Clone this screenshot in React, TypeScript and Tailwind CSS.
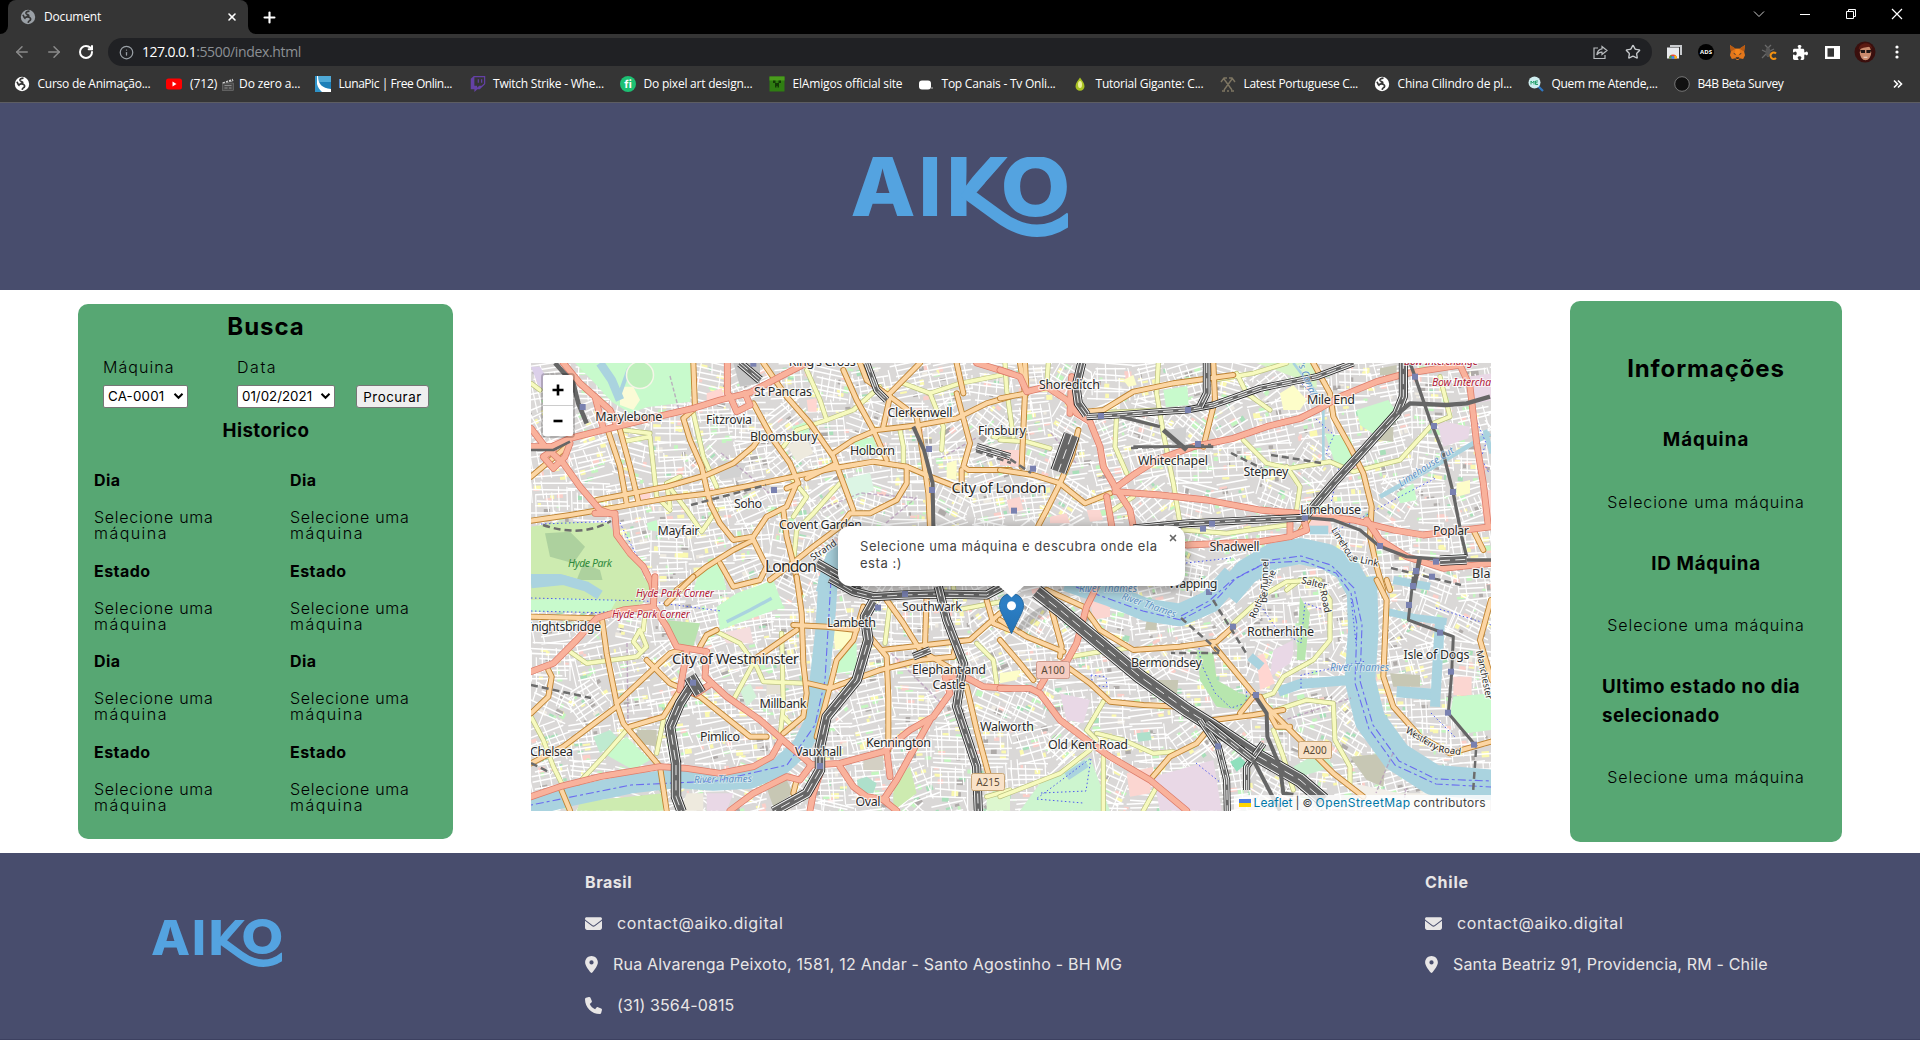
import React from "react";
import { FaEnvelope, FaLocationDot, FaPhone, FaPuzzlePiece, FaTwitch } from "react-icons/fa6";
import { ArrowLeft, ArrowRight, Info, RotateCw, Star, X, Plus } from "lucide-react";

/* ---------- Logo ---------- */

function AikoLogo({ className }: { className: string }) {
  return (
    <svg className={className} viewBox="0 0 216 80" preserveAspectRatio="none">
      <defs>
        <clipPath id="k-upper">
          <path d="M95 -5 H160 L126 34 L116 44 V62 H95 Z" />
        </clipPath>
      </defs>
      <g fill="#54a3e0" fontFamily="Inter" fontWeight="800" fontSize="81">
        <text x="-1.5" y="59.3" textLength="65" lengthAdjust="spacingAndGlyphs">A</text>
        <text x="66.5" y="59.3">I</text>
        <g clipPath="url(#k-upper)">
          <text x="94" y="59.3" textLength="66" lengthAdjust="spacingAndGlyphs">K</text>
        </g>
        <text x="148.5" y="59" textLength="70" lengthAdjust="spacingAndGlyphs">O</text>
      </g>
      <path
        d="M112 34 L147 59.5 C160 69 171 73.700 185 73.700 C198 73.700 208 69.500 219 60.500"
        fill="none"
        stroke="#54a3e0"
        strokeWidth="12.5"
      />
    </svg>
  );
}

/* ---------- Browser icons ---------- */

function Globe({ color, className = "size-4" }: { color: string; className?: string }) {
  return (
    <svg className={className} viewBox="0 0 16 16">
      <circle cx="8" cy="8" r="7.2" fill={color} />
      <path d="M9.500 2.200c-2 .2-3.800.6-3.500 2.200.3 1.300 2 .8 2.600 1.700.5 1-1 1.300-2.200 1.400M5 8.500c1.500-.6 4-.7 5.200.5 1 1 .2 2.200-.9 2.900-.6.400-1 1-1.100 1.900M3 5.800c.6 1.800 1.200 3 2.600 4" fill="none" stroke="#353535" strokeWidth="1.700" />
    </svg>
  );
}

function YouTubeIcon() {
  return (
    <svg className="size-4" viewBox="0 0 16 16">
      <rect x="0" y="2.500" width="16" height="11" rx="2.500" fill="#f00" />
      <path d="M6.500 5.600v4.800l4-2.400z" fill="#fff" />
    </svg>
  );
}

function LunaIcon() {
  return (
    <svg className="size-4" viewBox="0 0 16 16">
      <rect width="16" height="16" fill="#1d7fb8" />
      <rect width="16" height="6" fill="#4fa9d6" />
      <path d="M3 0c0 8 4 12 13 13v3H0V0z" fill="#fff" />
      <path d="M0 0h2v8c1 4 3 6 5 8H0z" fill="#2f93c9" />
    </svg>
  );
}

function FiIcon() {
  return (
    <span className="flex size-4 items-center justify-center rounded-full bg-[#1dbf73] font-['Inter'] text-[11px] leading-none font-bold text-white">
      fi
    </span>
  );
}

function CreeperIcon() {
  return (
    <svg className="size-4" viewBox="0 0 16 16">
      <rect x="0.500" y="0.500" width="15" height="15" fill="#2f7d12" />
      <rect x="0.500" y="0.500" width="15" height="4" fill="#4a9c1c" />
      <path d="M4 4.500h2.500v2.500h3v-2.500h2.500v2.500h-2v4.500h-1.500v-1.500h-1v1.500h-1.500v-4.500h-2z" fill="#123a05" />
    </svg>
  );
}

function TvIcon() {
  return (
    <svg className="size-4" viewBox="0 0 16 16">
      <rect x="1" y="4.500" width="12" height="9" rx="3" fill="#fff" />
      <rect x="13.500" y="11" width="1" height="2" fill="#bbb" />
    </svg>
  );
}

function DropIcon() {
  return (
    <svg className="size-4" viewBox="0 0 16 16">
      <path d="M8 1.500C10 4.500 12.500 7 12.500 10.200A4.500 4.500 0 0 1 3.500 10.200C3.500 7 6 4.500 8 1.500z" fill="#a9c223" />
      <ellipse cx="8" cy="8.500" rx="2" ry="3.500" fill="#eef09a" />
    </svg>
  );
}

function PickaxesIcon() {
  return (
    <svg className="size-4" viewBox="0 0 16 16" fill="none" stroke="#7d7562" strokeWidth="1.400">
      <path d="M4 3l8 11M12 3L4 14M1 6l3-4 3 0M15 6l-3-4-3 0M2 15h3M11 15h3M7 15h2" />
    </svg>
  );
}

function MagnifierIcon() {
  return (
    <svg className="size-4" viewBox="0 0 16 16">
      <path d="M10 10l5 5" stroke="#2f78c4" strokeWidth="2.200" />
      <circle cx="6.500" cy="6.500" r="6" fill="#cfeef0" />
      <path d="M3 8.500V5l1.500 2L6 5v3.500M10 5H7.500v3.500H10M7.500 6.800H9.500" stroke="#23a06a" fill="none" />
    </svg>
  );
}

function DarkDotIcon() {
  return (
    <svg className="size-4" viewBox="0 0 16 16">
      <circle cx="8" cy="8" r="7.300" fill="#111" stroke="#777" />
    </svg>
  );
}

function ClapperIcon() {
  return (
    <svg className="mx-[5px] h-[13px] w-3" viewBox="0 0 12 13">
      <rect x="0.500" y="5" width="11" height="7.500" fill="#4a4a4a" stroke="#777" strokeWidth="0.600" />
      <path d="M0.500 4.500L10.500 0.800L11.500 3L1 5.500z" fill="#ddd" />
      <path d="M3 3.500l1 1.200M6 2.500l1 1.200M9 1.400l1 1.200" stroke="#222" strokeWidth="1.300" />
      <path d="M2.500 7.500h7M2.500 10h3M7 10h2.500" stroke="#aaa" strokeWidth="0.700" />
    </svg>
  );
}

const bookmarks = [
  { icon: <Globe color="#fff" />, text: "Curso de Animação...", box: "w-[152px]", track: "tracking-[-0.25px]" },
  { icon: <YouTubeIcon />, text: "", box: "w-[149px]", track: "" },
  { icon: <LunaIcon />, text: "LunaPic | Free Onlin...", box: "w-[154.500px]", track: "tracking-[-0.45px]" },
  { icon: <FaTwitch className="size-4 text-[#6441a5]" />, text: "Twitch Strike - Whe...", box: "w-[150.500px]", track: "tracking-[-0.23px]" },
  { icon: <FiIcon />, text: "Do pixel art design...", box: "w-[149px]", track: "tracking-[-0.22px]" },
  { icon: <CreeperIcon />, text: "ElAmigos official site", box: "w-[149px]", track: "tracking-[-0.17px]" },
  { icon: <TvIcon />, text: "Top Canais - Tv Onli...", box: "w-[154px]", track: "tracking-[-0.23px]" },
  { icon: <DropIcon />, text: "Tutorial Gigante: C...", box: "w-[148px]", track: "tracking-[-0.22px]" },
  { icon: <PickaxesIcon />, text: "Latest Portuguese C...", box: "w-[154px]", track: "tracking-[-0.31px]" },
  { icon: <Globe color="#fff" />, text: "China Cilindro de pl...", box: "w-[154px]", track: "tracking-[-0.18px]" },
  { icon: <MagnifierIcon />, text: "Quem me Atende,...", box: "w-[146px]", track: "tracking-[-0.29px]" },
  { icon: <DarkDotIcon />, text: "B4B Beta Survey", box: "w-[150px]", track: "tracking-[-0.38px]" },
];

function BrowserChrome() {
  return (
    <div className="h-[103px] w-full border-b border-[#5d5d62] bg-[#353535] font-['Open_Sans',sans-serif] text-xs text-white">
      <div className="flex h-[34px] items-end bg-black">
        <div className="h-2 w-2 bg-[#353535]">
          <div className="h-2 w-2 rounded-br-lg bg-black" />
        </div>
        <div className="flex h-[34px] w-60 items-center rounded-t-lg bg-[#353535] pr-[10px] pl-3">
          <Globe color="#9aa0a6" />
          <span className="ml-2 tracking-[-0.17px]">Document</span>
          <X className="ml-auto size-3" strokeWidth={3.2} />
        </div>
        <div className="h-2 w-2 bg-[#353535]">
          <div className="h-2 w-2 rounded-bl-lg bg-black" />
        </div>
        <div className="flex h-[34px] grow items-center">
          <Plus className="ml-[5px] size-[17px]" strokeWidth={3} />
          <div className="mr-[17px] mb-[6px] ml-auto flex w-[150px] items-center justify-between">
            <svg className="h-3 w-3" viewBox="0 0 12 12" fill="none" stroke="#ccc">
              <path d="M1 3.500l5 5 5-5" />
            </svg>
            <svg className="h-3 w-3" viewBox="0 0 12 12" stroke="#fff">
              <path d="M1 6.500h10" />
            </svg>
            <svg className="h-3 w-3" viewBox="0 0 12 12" fill="none" stroke="#fff">
              <path d="M1.500 3.500h7v7h-7zM3.500 3.500v-2h7v7h-2" />
            </svg>
            <svg className="h-3 w-3" viewBox="0 0 12 12" stroke="#fff" strokeWidth="1.200">
              <path d="M1 1l10 10M11 1L1 11" />
            </svg>
          </div>
        </div>
      </div>

      <div className="flex h-9 items-center pl-[13px]">
        <ArrowLeft className="size-[18px] text-[#8b8b8b]" />
        <ArrowRight className="ml-[14px] size-[18px] text-[#8b8b8b]" />
        <RotateCw className="ml-[15px] size-4" strokeWidth={3} />
        <div className="ml-[14px] flex h-7 w-[1544px] items-center rounded-full bg-[#202124] pr-[11px] pl-[11px] text-sm">
          <Info className="size-[15px] text-[#9aa0a6]" />
          <span className="ml-[8px] tracking-[-0.55px]">127.0.0.1</span>
          <span className="tracking-[-0.35px] text-[#8c9094]">:5500/index.html</span>
          <svg className="ml-auto size-[15px]" viewBox="0 0 15 15" fill="none" stroke="#b8bbbe" strokeWidth="1.200">
            <path d="M5 3H1v10.500h11V10M9 1.500l5 4-5 4V7.200C6.500 7 5 8 3.800 10 4.200 6.500 6 4.300 9 3.800z" />
          </svg>
          <Star className="ml-[17px] size-4 text-[#c7cacd]" />
        </div>
        <div className="ml-[14px] flex grow items-center">
          <svg className="size-4" viewBox="0 0 16 16">
            <path d="M4 1h12v10h-2V3H4z" fill="#c9cbce" />
            <rect x="1" y="3.500" width="12" height="11" fill="#e8eaed" />
            <path d="M3 14.500a4 4 0 0 1 8 0z" fill="#ea4335" />
            <path d="M3 14.500a4 4 0 0 1 2-3.500l2 3.500z" fill="#34a853" />
            <path d="M9 11a4 4 0 0 1 2 3.500H7z" fill="#fbbc04" />
            <circle cx="7" cy="13.500" r="1.600" fill="#4285f4" />
          </svg>
          <span className="ml-4 flex size-4 items-center justify-center rounded-full bg-black text-[6px] font-bold">ADS</span>
          <svg className="ml-[15px] size-[17px]" viewBox="0 0 18 18">
            <path d="M1 1l6 4h4l6-4-1 7 1 4-2 4-4-1-1 2H8l-1-2-4 1-2-4 1-4z" fill="#e2761b" />
            <path d="M7 5h4l1 5-3 2-3-2z" fill="#f6851b" />
            <path d="M1 1l6 4-5 3zM17 1l-6 4 5 3z" fill="#b85a12" />
            <path d="M7 14h4l-1 2H8z" fill="#2b2b2b" />
            <path d="M5 10l2 1M13 10l-2 1" stroke="#333" />
          </svg>
          <svg className="ml-[15px] size-[17px]" viewBox="0 0 17 17">
            <path d="M4 1l3 3M10 1L7 4M1 6l4 2M13 5L9 7M1 14l4-4M7 4v9" stroke="#6a6a6a" strokeWidth="1.300" />
            <ellipse cx="7" cy="8" rx="2.500" ry="4.500" fill="#555" />
            <path d="M15 9.500A3.200 3.200 0 1 0 15 14" fill="none" stroke="#f29111" strokeWidth="2" />
          </svg>
          <FaPuzzlePiece className="ml-[15px] size-[15px]" />
          <svg className="ml-[17px] size-[15px]" viewBox="0 0 15 15">
            <path d="M0 1h15v13H0zM2.500 3.300v8.400h6.500V3.300z" fill="#fff" fillRule="evenodd" />
          </svg>
          <svg className="ml-[14px] size-[22px]" viewBox="0 0 23 23">
            <circle cx="11.500" cy="11.500" r="11" fill="#3a0f0d" />
            <ellipse cx="12" cy="12" rx="6" ry="8" fill="#c98a6d" />
            <path d="M5 9c0-8 13-9 14-1l-3-2-6 1z" fill="#5c1a12" />
            <path d="M6.500 9.500h5v3h-4zM13 9.500h5l-1 3h-4z" fill="#1c1414" />
            <path d="M10 17h4" stroke="#f0e0d5" />
          </svg>
          <svg className="ml-[19px] h-4 w-1" viewBox="0 0 4 16" fill="#fff">
            <circle cx="2" cy="3" r="1.600" />
            <circle cx="2" cy="8" r="1.600" />
            <circle cx="2" cy="13" r="1.600" />
          </svg>
        </div>
      </div>

      <div className="flex h-[28px] items-center pl-[14px] whitespace-nowrap">
        {bookmarks.map((b) => (
          <div key={b.box + b.text} className={`flex shrink-0 items-center ${b.box}`}>
            {b.icon}
            {b.text ? (
              <span className={`ml-[7.500px] ${b.track}`}>{b.text}</span>
            ) : (
              <span className="ml-[8px] flex items-center tracking-[-0.12px]">
                (712)
                <ClapperIcon />
                Do zero a...
              </span>
            )}
          </div>
        ))}
        <svg className="mr-[17px] ml-auto size-[10px]" viewBox="0 0 10 10" fill="none" stroke="#fff" strokeWidth="1.600">
          <path d="M1 1.500l3.500 3.500L1 8.500M5 1.500l3.500 3.500L5 8.500" />
        </svg>
      </div>
    </div>
  );
}

/* ---------- Search panel ---------- */

function SelectBox({ value, box, track }: { value: string; box: string; track: string }) {
  return (
    <div className={`relative h-[23px] ${box}`}>
      <select
        className={`block h-full w-full appearance-none rounded-[2px] border border-[#767676] bg-white pl-[4px] text-[13.33px] leading-[19px] font-normal text-black ${track}`}
        defaultValue={value}
      >
        <option>{value}</option>
      </select>
      <svg className="pointer-events-none absolute top-[7px] right-[4px] h-2 w-[11px]" viewBox="0 0 11 8" fill="none" stroke="#000" strokeWidth="2">
        <path d="M1.500 1.800L5.500 5.800L9.500 1.800" />
      </svg>
    </div>
  );
}

function HistoryColumn() {
  return (
    <div className="flex flex-col gap-[21.300px] text-base leading-4">
      {["Dia", "Estado", "Dia", "Estado"].map((title, i) => (
        <React.Fragment key={i}>
          <h4 className="font-bold tracking-[0.45px]">{title}</h4>
          <p className="font-light tracking-[0.74px]">
            Selecione uma
            <br />
            <span className="tracking-[1.450px]">máquina</span>
          </p>
        </React.Fragment>
      ))}
    </div>
  );
}

function SearchPanel() {
  return (
    <section className="mt-[14px] ml-[78px] flex h-[535px] w-[375px] shrink-0 flex-col rounded-[10px] bg-[#57a773] pt-[5px] text-black">
      <h2 className="pl-[1px] text-center text-2xl leading-9 font-bold tracking-[0.95px]">Busca</h2>
      <div className="mt-[10px] flex pl-[25px] font-light">
        <label className="flex w-[134px] flex-col gap-[6px] tracking-[1.050px]">
          Máquina
          <SelectBox value="CA-0001" box="w-[85px]" track="tracking-[0.2px]" />
        </label>
        <label className="flex w-[119px] flex-col gap-[6px] tracking-[1.550px]">
          Data
          <SelectBox value="01/02/2021" box="w-[98px]" track="tracking-[0px]" />
        </label>
        <button className="mt-[30px] h-[23px] w-[73px] rounded-[3px] border border-[#767676] bg-[#efefef] pt-[2px] text-[13.33px] leading-none font-normal tracking-[0.5px]">
          Procurar
        </button>
      </div>
      <h3 className="mt-[9px] pl-[1px] text-center text-[18.72px] leading-7 font-bold tracking-[0.45px]">Historico</h3>
      <div className="mt-[27px] grid grid-cols-[196px_1fr] pl-4">
        <HistoryColumn />
        <HistoryColumn />
      </div>
    </section>
  );
}

/* ---------- Info panel ---------- */

function InfoPanel() {
  return (
    <section className="mt-[11px] ml-[79px] flex h-[541px] w-[272px] shrink-0 flex-col items-center rounded-[10px] bg-[#57a773] pt-[50px] text-black">
      <h2 className="text-2xl leading-9 font-bold tracking-[0.9px]">Informações</h2>
      <h3 className="mt-[39px] text-[18.72px] leading-7 font-bold tracking-[1.050px]">Máquina</h3>
      <p className="mt-9 leading-6 font-light tracking-[0.92px]">Selecione uma máquina</p>
      <h3 className="mt-9 text-[18.72px] leading-7 font-bold tracking-[0.7px]">ID Máquina</h3>
      <p className="mt-[35px] leading-6 font-light tracking-[0.92px]">Selecione uma máquina</p>
      <h3 className="mt-[35px] w-[208px] text-[18.72px] leading-[29px] font-bold tracking-[0.6px] whitespace-nowrap">
        Ultimo estado no dia
        <br />
        selecionado
      </h3>
      <p className="mt-[35px] leading-6 font-light tracking-[0.92px]">Selecione uma máquina</p>
    </section>
  );
}

/* ---------- Map drawing ---------- */

type Shape = { d: string; w?: number };
type Tile = {
  dx: number;
  dy: number;
  areas: { d: string; c: string }[];
  water: Shape[];
  rail: Shape[];
  yellow: string[];
  orange: string[];
  red: string[];
  stations: [number, number][];
};

const GREEN = "#c8facc";
const PARK = "#cdebb0";
const WOOD = "#add19e";
const MAUVE = "#e9d8e6";
const PINK = "#fbd6d1";
const BROWN = "#c7c7b4";

const tiles: Tile[] = [
  {
    dx: -33,
    dy: -39,
    areas: [
      { d: "165,39 522,39 510,155 380,172 330,190 275,155 220,95", c: GREEN },
      { d: "300,110 340,110 360,150 340,180 300,165", c: "#fbfbd6" },
      { d: "33,530 120,515 265,520 300,575 350,630 390,725 33,725", c: PARK },
      { d: "75,550 150,545 195,590 160,640 90,620", c: WOOD },
      { d: "190,640 240,660 250,700 170,690", c: WOOD },
      { d: "33,680 100,690 140,725 33,725", c: WOOD },
      { d: "965,390 1050,368 1062,420 990,452", c: "#dcf5e4" },
      { d: "1000,275 1060,260 1072,305 1020,312", c: GREEN },
      { d: "815,230 860,215 870,250 830,260", c: GREEN },
      { d: "800,285 860,265 880,310 830,335", c: "#eeeade" },
      { d: "380,520 410,510 415,545 385,540", c: GREEN },
      { d: "560,130 605,115 615,150 560,160", c: "#ffd6d1" },
      { d: "860,150 890,145 890,185 865,185", c: "#ffd6d1" },
      { d: "355,420 390,420 390,455 360,450", c: "#ffd6d1" },
      { d: "590,330 680,340 660,380 600,390", c: "#d2d2d2" },
      { d: "640,39 720,39 720,100 660,110", c: "#c4c4c4" },
      { d: "540,660 600,640 620,720 520,720", c: GREEN },
      { d: "33,50 60,50 90,100 60,120", c: "#dcd0ea" },
      { d: "1280,340 1310,330 1310,390 1280,385", c: "#fdfdc9" },
    ],
    water: [
      { d: "240,39 275,90 300,150", w: 26 },
      { d: "300,130 325,60 345,39", w: 12 },
      { d: "33,690 120,690 200,715 250,740", w: 36 },
      { d: "960,590 935,650 915,730", w: 56 },
    ],
    rail: [
      { d: "105,39 160,100 175,160 200,220", w: 14 },
      { d: "660,39 720,90", w: 20 },
      { d: "1040,39 1070,120 1100,150", w: 16 },
      { d: "1180,230 1212,300 1238,400 1240,530", w: 12 },
      { d: "1370,290 1470,320", w: 16 },
      { d: "33,300 100,300 150,275", w: 8 },
      { d: "890,640 960,680 1020,720", w: 26 },
    ],
    yellow: [
      "33,100 60,120", "310,275 390,260 400,350 410,440 450,480", "520,190 550,320 590,410",
      "440,400 500,480 545,545 590,480", "860,60 900,150 920,210 1000,180 1080,110", "920,210 830,240 790,290",
      "1150,100 1230,130 1320,100 1470,70", "1230,130 1270,230 1265,300", "820,640 830,540 880,490 960,400",
      "1420,260 1470,270", "820,500 860,440 810,380", "310,240 390,250", "1150,350 1150,290 1140,240", "450,470 440,400 480,380",
    ],
    orange: [
      "33,512 150,495 240,480 300,470 440,445 570,430 700,405 820,380 940,355 1060,335 1160,350 1230,380 1320,415",
      "230,450 440,410 560,375 640,340 700,290 720,260", "33,380 140,290", "265,245 300,350 320,460", "300,240 330,350 355,455",
      "520,39 525,175 490,205 510,270 545,350 570,460 600,520 640,570 700,560 740,500 800,470 830,400",
      "700,160 760,270 810,340 835,400 800,415", "730,39 800,140 870,220 940,320 970,400 1000,480",
      "940,310 1000,270 1070,240 1200,225 1310,205 1400,160 1470,140", "860,385 940,345", "970,60 1010,150 1060,240 1100,330",
      "1020,39 1040,90 1110,140 1090,230", "1110,130 1200,39", "1110,140 1190,200 1210,320 1225,430 1230,530",
      "1310,130 1330,205 1350,280 1330,350 1345,360 1470,360", "1160,350 1160,400 1130,450 1050,490 990,490 960,530 880,590 830,630 750,690",
      "470,720 560,650 640,600 700,570", "790,480 800,560 820,640 840,730", "700,570 740,650 720,690 640,710 600,640", "1325,360 1325,410",
      "1330,130 1310,39",
    ],
    red: [
      "33,290 95,290 150,265 280,232 400,203 520,175 600,150 690,128 780,80 860,39", "130,39 180,100 225,140 270,180 290,225",
      "225,140 250,235", "622,39 622,130 635,145", "635,150 650,185 690,165 675,130", "33,235 75,290 130,340 180,410 240,480 285,495 290,555 330,610 370,650 395,700 402,740",
      "150,280 135,320 100,355 70,320 100,300", "1370,39 1470,70", "225,490 285,490",
    ],
    stations: [[188, 171], [762, 420], [1227, 297], [1236, 420], [700, 41]],
  },
  {
    dx: 1407,
    dy: -39,
    areas: [
      { d: "490,120 562,108 566,165 498,172", c: GREEN },
      { d: "1070,180 1165,150 1200,200 1140,265 1080,225", c: GREEN },
      { d: "975,250 1050,260 1072,330 1010,355", c: GREEN },
      { d: "770,39 950,39 950,115 880,80", c: "#d8f5c6" },
      { d: "840,130 880,105 920,150 900,180 850,180", c: "#fdfdc9" },
      { d: "370,90 400,75 410,105 385,110", c: "#fdfdc9" },
      { d: "1310,210 1410,230 1405,265 1330,290", c: MAUVE },
      { d: "1400,80 1475,70 1475,150 1430,160", c: MAUVE },
      { d: "1130,240 1180,230 1180,275 1130,270", c: BROWN },
      { d: "1140,55 1190,45 1190,75 1140,75", c: BROWN },
      { d: "1190,430 1240,400 1250,450 1200,460", c: GREEN },
      { d: "1370,400 1410,390 1410,430 1370,440", c: "#fdfdc9" },
      { d: "920,510 990,510 1000,550 940,540", c: PINK },
      { d: "20,450 60,440 70,480 30,490", c: PINK },
      { d: "150,500 200,490 210,520 150,520", c: PINK },
      { d: "260,480 300,480 310,510 270,515", c: PINK },
      { d: "0,300 60,300 55,350 0,345", c: PINK },
      { d: "500,240 560,230 555,290 520,290", c: "#d0d0d0" },
      { d: "1440,420 1475,420 1475,520 1450,500", c: PINK },
    ],
    water: [
      { d: "680,735 740,665 820,618 900,603 980,620 1040,655 1085,735", w: 78 },
      { d: "970,180 970,330", w: 8 },
      { d: "880,39 950,130", w: 8 },
      { d: "1140,440 1300,350 1470,250", w: 14 },
      { d: "1180,690 1290,710", w: 24 },
      { d: "1455,240 1475,310", w: 14 },
      { d: "930,540 985,540", w: 26 },
    ],
    rail: [
      { d: "260,200 350,195 480,185 560,180 640,165 780,115 950,80 1060,39", w: 16 },
      { d: "245,39 228,110 235,160 260,195", w: 22 },
      { d: "620,39 620,130 600,170", w: 18 },
      { d: "915,500 1000,400 1100,290 1190,190 1210,140 1210,39", w: 22 },
      { d: "1195,190 1230,160 1340,165 1400,160 1470,140", w: 13 },
      { d: "400,535 560,520 760,510 915,503", w: 18 },
      { d: "915,503 1000,510 1080,540 1140,590 1220,620 1340,630 1475,630", w: 10 },
      { d: "1230,39 1245,80 1290,210 1330,310 1360,430 1385,560 1400,620", w: 10 },
      { d: "360,200 480,230", w: 10 },
      { d: "490,240 560,300", w: 14 },
      { d: "215,255 175,365", w: 44 },
      { d: "1320,632 1400,628", w: 26 },
      { d: "1260,620 1240,720", w: 14 },
      { d: "400,290 640,290", w: 8 },
    ],
    yellow: [
      "15,39 20,120 40,260", "0,270 80,275 150,295", "145,39 140,110", "350,190 345,290 380,370", "340,480 400,440",
      "475,39 470,130 490,250 520,400 540,520", "640,90 760,70 860,39", "710,70 740,130 810,180", "730,270 800,340 870,355 990,335 1060,365 1200,330 1300,220 1350,200 1320,80",
      "860,350 900,410 890,480", "550,540 680,550 860,525", "270,190 480,180",
      "860,720 900,690 960,690",
    ],
    orange: [
      "0,145 80,130 75,39", "60,39 75,130 65,350", "260,185 310,180 400,125 520,100 700,75", "640,39 645,150 610,290",
      "0,360 100,375 180,400 255,460 330,430", "235,240 215,320 180,400 140,480 115,527", "940,39 990,130 1000,200 1050,290 1090,370 1115,470 1110,560 1130,650 1150,720",
      "1420,540 1450,600", "900,545 930,500", "1160,690 1170,720",
    ],
    red: [
      "0,60 60,80 80,125 140,110 200,150 230,190 270,215 300,290 310,350 345,410 390,480 400,530", "215,80 210,190",
      "345,415 400,375 470,330 580,290 700,265 800,230 900,205 960,175 1020,140 1130,95 1220,70 1380,45 1410,110 1430,280 1450,400 1465,530",
      "345,425 480,435 620,450 780,480 900,490 1060,510 1180,540 1270,555 1475,530", "1100,510 1140,570 1220,620 1330,655 1475,640",
      "560,585 780,575 870,560 920,540 910,500", "320,440 335,527", "870,560 870,520",
    ],
    stations: [[303, 198], [564, 180], [594, 282], [99, 356], [42, 482], [915, 503], [636, 521], [609, 536], [1245, 80], [1302, 228], [1359, 426], [1140, 588], [1308, 635], [1248, 663], [1296, 680]],
  },
  {
    dx: -33,
    dy: 651,
    areas: [
      { d: "33,0 400,0 370,70 280,100 33,95", c: PARK },
      { d: "130,55 290,60 270,95 33,95 33,60", c: GREEN },
      { d: "590,80 650,40 760,0 790,80 600,150", c: GREEN },
      { d: "430,120 540,130 520,200 475,195", c: "#b9e2ae" },
      { d: "320,470 390,540 340,570 250,520", c: GREEN },
      { d: "180,665 430,640 430,692 170,692", c: PARK },
      { d: "960,200 1010,190 1010,270 950,280", c: GREEN },
      { d: "940,150 1000,130 990,200 945,210", c: "#fdfdc9" },
      { d: "660,330 690,310 710,350 680,380", c: "#d3f3d9" },
      { d: "740,300 790,300 790,340 740,345", c: "#e4e0d4" },
      { d: "500,640 550,640 550,692 480,692", c: "#eeeade" },
      { d: "560,640 640,640 620,692 560,692", c: MAUVE },
      { d: "735,610 800,600 820,640 760,680", c: BROWN },
      { d: "350,450 410,450 410,500 360,490", c: BROWN },
      { d: "1010,600 1040,590 1070,610 1060,640 1020,640", c: "#aee0cb" },
      { d: "1120,600 1170,560 1190,640 1120,692", c: PARK },
      { d: "220,470 270,450 300,480 240,520", c: "#bfead0" },
      { d: "600,160 690,140 700,190 620,190", c: "#f5dede" },
      { d: "1400,640 1470,640 1470,692 1400,692", c: "#ddf7cf" },
      { d: "1030,520 1090,520 1090,570 1030,570", c: "#d4d0c4" },
    ],
    water: [
      { d: "925,-10 915,150 898,300 885,420 845,500 780,560 690,597 580,603 470,595 330,612 150,650 20,682", w: 58 },
      { d: "33,10 130,0 200,20 240,45", w: 30 },
      { d: "620,125 690,90 755,55", w: 10 },
    ],
    rail: [
      { d: "930,-5 1000,35 1060,50 1150,45 1250,42 1400,45 1455,15", w: 22 },
      { d: "1060,65 1035,110 1045,180 1010,300 920,410 900,500 900,570 860,640 760,695", w: 26 },
      { d: "1255,20 1280,120 1330,250 1310,380 1370,560 1375,695", w: 22 },
      { d: "525,300 480,370 450,440 468,550 468,650 485,695", w: 26 },
      { d: "510,290 540,340", w: 34 },
      { d: "1180,230 1230,210", w: 18 },
    ],
    yellow: [
      "150,215 200,250 350,230 380,200 360,150 340,185 360,210", "33,410 70,480 100,560 130,620", "175,610 250,530 320,450 340,440",
      "430,420 410,520", "590,155 660,190 710,260 730,305 860,310", "700,250 640,360", "785,160 790,380 780,470", "1370,190 1420,240 1430,310",
      "1400,650 1470,630", "820,440 790,410", "370,150 375,100", "1110,70 1095,190", "1300,20 1310,90 1470,60",
    ],
    orange: [
      "33,110 230,115", "245,110 260,220 290,370 310,430 420,560 440,692", "33,400 85,350 95,290 85,270", "290,370 450,220 480,210", "33,550 130,500 290,380",
      "120,620 150,692", "380,240 450,310 540,350 690,470 740,470", "540,200 560,165 590,150", "700,240 830,150", "830,-10 845,100 850,250 860,340 850,410 790,460",
      "820,135 920,140 1010,150", "865,310 930,325 1080,270 1200,240 1300,230", "930,320 950,240 1000,180 1030,80", "930,320 890,470",
      "1085,210 1350,180 1440,100", "1050,170 1100,230 1105,350 1105,510", "1100,60 1150,130 1200,210 1350,300", "1340,320 1370,450 1410,600",
      "1220,40 1215,200", "1400,60 1420,130 1470,150", "330,440 430,410 480,330", "440,70 520,-10", "1300,230 1310,180", "820,640 830,600",
    ],
    red: [
      "405,-10 400,80 440,140 470,200 560,215 555,290 620,350 720,420 800,490 870,550", "33,275 100,250 170,180 230,115 310,90 400,80",
      "500,215 480,330 530,340 575,310", "33,650 120,620 240,590 420,560 500,565 600,580 700,560 755,530 780,485", "870,555 960,550 1090,515 1170,450 1240,410 1290,340 1275,290 1335,290 1390,320 1470,325",
      "1100,510 1110,590", "1230,420 1180,510 1130,600 1090,660 1130,692", "870,560 840,600 800,590 700,640 630,692", "960,560 1000,620 1040,650 1100,660", "900,580 880,640 870,692",
    ],
    stations: [[1155, 42], [1074, 83], [519, 308], [900, 558]],
  },
  {
    dx: 1407,
    dy: 651,
    areas: [
      { d: "590,210 640,220 650,300 720,340 760,350 720,390 650,380 600,300", c: "#b7e6ae" },
      { d: "120,610 270,530 310,640 330,692 60,692", c: "#cdf5cf" },
      { d: "1360,350 1473,340 1473,450 1400,460 1350,400", c: GREEN },
      { d: "900,50 930,100 915,240 890,240", c: "#b7e6ae" },
      { d: "180,340 270,360 250,430 200,420", c: MAUVE },
      { d: "460,590 640,540 665,692 480,692", c: MAUVE },
      { d: "820,210 880,180 880,220 870,250 810,290", c: MAUVE },
      { d: "770,230 790,220 825,310 780,330", c: "#ffd6d1" },
      { d: "1050,530 1160,520 1150,620 1100,600", c: BROWN },
      { d: "1170,280 1260,285 1260,320 1180,320", c: BROWN },
      { d: "470,300 535,300 530,350 480,350", c: BROWN },
      { d: "440,120 470,120 470,150 435,150", c: BROWN },
      { d: "380,580 460,560 450,640 390,650", c: PINK },
      { d: "270,60 330,50 330,110 280,120", c: PINK },
      { d: "1360,290 1415,290 1415,345 1360,345", c: PINK },
      { d: "690,545 720,530 740,550 710,575", c: "#8fe0bd" },
      { d: "410,460 450,455 455,480 415,485", c: "#aee0cb" },
      { d: "880,560 970,510 1000,560 900,590", c: "#c8f0cf" },
      { d: "0,280 60,270 50,300 0,310", c: "#fdfdc9" },
      { d: "1060,610 1200,640 1470,640 1470,692 1100,692", c: "#f2efe9" },
    ],
    water: [
      { d: "200,0 330,45 440,90 540,105 630,65 700,-15", w: 68 },
      { d: "1085,-10 1090,150 1080,300 1110,420 1190,530 1300,600 1480,615", w: 92 },
      { d: "835,335 900,312 1050,300", w: 30 },
      { d: "1160,95 1240,112 1340,125", w: 22 },
      { d: "1190,335 1320,345", w: 34 },
      { d: "1320,120 1305,380", w: 30 },
      { d: "750,230 785,260", w: 26 },
      { d: "200,590 260,550", w: 24 },
    ],
    rail: [
      { d: "110,35 180,90 300,190 420,290 560,390 640,440 760,520 900,600 970,660", w: 38 },
      { d: "600,420 655,500 680,600 682,695", w: 16 },
      { d: "760,340 800,400 802,470 840,560 850,640 880,645", w: 12 },
      { d: "740,630 740,560 790,490", w: 16 },
      { d: "760,540 840,692", w: 12 },
      { d: "620,430 760,540", w: 20 },
      { d: "1240,-10 1225,120 1360,170 1355,280 1345,400 1430,500", w: 9 },
    ],
    yellow: [
      "210,230 300,215 380,205", "310,365 260,450 290,480", "290,460 370,480 460,520 520,515", "310,530 310,692", "0,650 180,580 270,510",
      "470,620 430,692", "700,130 800,40 860,5 950,0 990,60 990,180 940,240 850,290 820,340 790,350", "820,450 850,530 880,630",
      "830,390 920,360 1000,370 1005,480 1050,560 1050,610",
    ],
    orange: [
      "0,180 60,250 100,300", "0,120 80,170 190,215", "140,30 250,80 300,150 400,210 540,200 650,185 700,140", "155,90 185,200 180,230",
      "200,260 270,310 330,365 430,375 540,380", "640,195 760,340 900,480 1000,580 1090,650", "640,420 760,405 850,390", "720,400 760,350",
      "640,430 590,490 510,530 450,600", "1130,0 1160,60 1150,290 1180,380 1260,470 1350,520 1473,485", "1473,60 1440,180 1475,300", "780,350 830,440 870,440",
    ],
    red: ["290,20 260,80 230,190 200,245 150,270 120,320", "0,325 90,325 120,340 180,420 260,480 330,530 450,600 560,692"],
    stations: [[627, 36], [699, 140], [768, 345], [654, 499], [1239, 18], [1227, 75], [1320, 158], [1353, 275], [1344, 398], [1422, 494]],
  },
];

function randomizer(seed: number) {
  let s = seed;
  return () => {
    s = (s * 1664525 + 1013904223) % 4294967296;
    return s / 4294967296;
  };
}

/* Side streets: small rotated grids, one for each patch of the city. */
function buildCity() {
  const rnd = randomizer(77);
  let streets = "";
  let lanes = "";
  const blocks: { d: string; c: string }[] = [];
  const cell = 40;
  for (let y = 0; y < 460; y += cell) {
    for (let x = 0; x < 970; x += cell) {
      const a = rnd() < 0.5 ? -0.25 + rnd() * 0.3 : -0.8 + rnd() * 1.5;
      const ca = Math.cos(a);
      const sa = Math.sin(a);
      const cx = x + cell / 2;
      const cy = y + cell / 2;
      const at = (u: number, v: number) => `${(cx + u * ca - v * sa).toFixed(1)} ${(cy + u * sa + v * ca).toFixed(1)}`;
      for (let v = -20; v <= 20; v += 4 + rnd() * 4.5) {
        const u0 = -25 + rnd() * 14;
        const u1 = 25 - rnd() * 14;
        streets += `M${at(u0, v)}L${at(u1, v + rnd() * 3 - 1.5)}`;
      }
      for (let u = -20; u <= 20; u += 4.5 + rnd() * 6) {
        const v0 = -24 + rnd() * 20;
        const v1 = v0 + 12 + rnd() * 28;
        lanes += `M${at(u, v0)}L${at(u + rnd() * 3, v1)}`;
      }
      for (let k = 0; k < 11; k++) {
        const u = -18 + rnd() * 34;
        const v = -18 + rnd() * 34;
        const w = 2 + rnd() * 6;
        const h = 2 + rnd() * 4;
        const p = rnd();
        const c = p < 0.25 ? "#fbf9b0" : p < 0.5 ? "#c4f6c0" : p < 0.64 ? "#fbcfc9" : p < 0.72 ? "#a9dfba" : p < 0.84 ? "#efebe2" : "#aeaaa8";
        blocks.push({ d: `M${at(u, v)}L${at(u + w, v)}L${at(u + w, v + h)}L${at(u, v + h)}Z`, c });
      }
    }
  }
  return { streets, lanes, blocks };
}

const city = buildCity();

function TileLayer({ children }: { children: (t: Tile) => React.ReactNode }) {
  return (
    <>
      {tiles.map((t, i) => (
        <g key={i} transform={`scale(0.33333) translate(${t.dx} ${t.dy})`}>
          {children(t)}
        </g>
      ))}
    </>
  );
}

type Label = [string, number, number, number, number?];
const places: Label[] = [
  ["King's Cross", 257.7, 3, 67], ["St Pancras", 223, 33, 58], ["Marylebone", 64.3, 57.5, 67], ["Fitzrovia", 175, 60.5, 46],
  ["Bloomsbury", 219, 78, 68], ["Clerkenwell", 356.5, 53.5, 65], ["Finsbury", 447, 71.5, 48], ["Holborn", 319, 92, 45],
  ["Soho", 203, 144.5, 28], ["Mayfair", 126.5, 171.5, 42], ["Covent Garden", 248, 166, 83], ["Shoreditch", 508, 25.5, 61],
  ["Mile End", 776, 40.5, 48], ["Whitechapel", 607, 101.5, 70], ["Stepney", 712.5, 112.5, 45], ["Limehouse", 769, 150.5, 61],
  ["Poplar", 902, 172, 36], ["Shadwell", 678.5, 187.5, 50], ["Wapping", 637.5, 225, 49], ["Blackwall", 941, 214.5, 55],
  ["Knightsbridge", -7, 267.5, 77], ["Southwark", 371, 248, 60], ["Lambeth", 296, 263.5, 49], ["Millbank", 228.5, 344.5, 47],
  ["Pimlico", 169, 378, 40], ["Chelsea", -1, 392.5, 43], ["Vauxhall", 264, 392.5, 47], ["Kennington", 335, 383.5, 65],
  ["Oval", 324.5, 443, 25], ["Elephant and", 381, 310.5, 74], ["Castle", 401.5, 326, 33], ["Walworth", 449, 367.5, 54],
  ["Bermondsey", 600, 303.5, 71], ["Rotherhithe", 716, 272.5, 67], ["Isle of Dogs", 872.5, 295.5, 66], ["Old Kent Road", 517, 385.5, 80],
  ["City of London", 420.5, 130, 95, 15], ["City of Westminster", 141, 301, 127, 15], ["London", 234, 208.5, 52, 16],
];

const waterLabels: { t: string; x: number; y: number; r: number; l: number }[] = [
  { t: "River Thames", x: 163, y: 420, r: -1, l: 58 },
  { t: "River Thames", x: 548, y: 229, r: 0, l: 58 },
  { t: "River Thames", x: 590, y: 236, r: 19, l: 57 },
  { t: "River Thames", x: 799, y: 308, r: 0, l: 59 },
  { t: "Limehouse Cut", x: 870, y: 124, r: -33, l: 64 },
  { t: "Regent's Canal", x: 755, y: -28, r: 68, l: 66 },
];

function CityMap() {
  const roadProps = { fill: "none", strokeLinejoin: "round" as const, strokeLinecap: "round" as const };
  return (
    <svg className="absolute inset-0" width="960" height="448" viewBox="0 0 960 448" fontFamily="'Noto Sans', sans-serif">
      <rect width="960" height="448" fill="#dad8d7" />
      {city.blocks.map((b, i) => (
        <path key={i} d={b.d} fill={b.c} />
      ))}
      <path d={city.lanes} fill="none" stroke="#fff" strokeWidth="1.2" />
      <path d={city.streets} fill="none" stroke="#fff" strokeWidth="1.5" />

      <TileLayer>
        {(t) => (
          <>
            {t.areas.map((a, i) => (
              <polygon key={i} points={a.d} fill={a.c} />
            ))}
            {t.water.map((w, i) => (
              <polyline key={i} points={w.d} fill="none" strokeLinejoin="round" stroke="#aad3df" strokeWidth={w.w} />
            ))}
          </>
        )}
      </TileLayer>

      <circle cx="109" cy="12" r="13.500" fill="#bff0bd" stroke="#f5f5e8" strokeWidth="1.500" />
      <g fill="none" stroke="#6a6cf0" strokeWidth="1.100" strokeDasharray="8 3 3 3">
        <path d="M300 217 L294 317 L284 362 L256 402 L185 418 L100 422 L0 442" />
        <path d="M545 224 L612 248 L650 257 L682 240 L705 215 L740 197 L770 193 L800 202 L823 225 L831 262 L829 318 L842 362 L868 398 L905 416 L960 418" />
        <path d="M650 253 L678 238 L700 218 L735 200 L772 198 L805 210 L820 230 L826 262 L824 320 L838 366 L864 402 L905 421 L960 424" />
      </g>
      <g fill="none" stroke="#4f5bf0" strokeWidth="1" strokeDasharray="1.500 2.500">
        <path d="M10 161 L88 158 L97 176 L112 204 M0 235 L115 238 L190 248 M60 250 L120 245 M0 248 L80 250" />
        <path d="M668 285 L670 300 L684 330 L700 345 L715 340 L716 322 M725 236 L745 265 L770 280 L774 240 L790 246" />
        <path d="M510 430 L555 428 L560 395 L520 425 L505 436 L552 440 M560 312 L575 314 L576 324 L562 322 Z" />
        <path d="M785 56 L803 72 L795 90 L808 105 L800 140 M800 170 L830 155 L870 133 L905 115 M655 200 L700 195" />
        <path d="M940 45 L955 80 L950 95 L958 110 M765 15 L780 30 M905 245 L960 262 M900 350 L925 375" />
        <path d="M770 325 L770 312 L835 298 M820 235 L825 280 M665 400 L690 420" />
      </g>
      <g fill="none" stroke="#b497b8" strokeWidth="1.400" strokeDasharray="4 2" opacity="0.75">
        <path d="M139 13 L150 55 M96 280 L97 360 M190 90 L215 110 L238 130 M355 160 L385 135 L330 130 L280 150 M360 290 L410 340 M520 70 L545 100 L530 90 M875 425 L872 445 M745 360 L820 335 M410 95 L445 75 M862 390 L845 430" />
      </g>

      <TileLayer>
        {(t) => (
          <g {...roadProps}>
            {t.yellow.map((p, i) => <polyline key={i} points={p} stroke="#b9c07c" strokeWidth="15" />)}
            {t.yellow.map((p, i) => <polyline key={i} points={p} stroke="#f7fabf" strokeWidth="11" />)}
          </g>
        )}
      </TileLayer>
      <TileLayer>
        {(t) => (
          <g {...roadProps}>
            {t.orange.map((p, i) => <polyline key={i} points={p} stroke="#bf8433" strokeWidth="18" />)}
            {t.orange.map((p, i) => <polyline key={i} points={p} stroke="#fcd6a4" strokeWidth="12.500" />)}
          </g>
        )}
      </TileLayer>
      <TileLayer>
        {(t) => (
          <g {...roadProps}>
            {t.red.map((p, i) => <polyline key={i} points={p} stroke="#dd7c6a" strokeWidth="20.500" />)}
            {t.red.map((p, i) => <polyline key={i} points={p} stroke="#f9b29c" strokeWidth="16" />)}
          </g>
        )}
      </TileLayer>

      <TileLayer>
        {(t) =>
          t.rail.map((r, i) => {
            const w = r.w ?? 10;
            return (
              <g key={i} fill="none" strokeLinejoin="round">
                {w > 15 && <polyline points={r.d} stroke="#222" strokeWidth={w + 5} />}
                {w > 15 && <polyline points={r.d} stroke="#f4f4f4" strokeWidth={w} />}
                <polyline points={r.d} stroke="#666" strokeWidth={w > 15 ? w - 6 : w} />
                {w > 15 && <polyline points={r.d} stroke="#e9e9e9" strokeWidth="3" strokeDasharray="30 16" />}
              </g>
            );
          })
        }
      </TileLayer>
      <g fill="none" stroke="#6c6c6c" strokeWidth="2.500" strokeDasharray="7 4">
        <path d="M12 162 Q50 175 80 158 M160 142 L235 122 M0 322 L60 335 M445 88 L480 100 M600 85 L680 82 M650 255 L690 290 L640 290 M740 92 L790 100 M860 205 L930 222 M700 90 L740 110 M0 400 L20 410 M470 90 L500 110 M945 387 L942 430 M682 237 L715 290" />
      </g>
      <TileLayer>
        {(t) => t.stations.map(([x, y], i) => <rect key={i} x={x - 9} y={y - 9} width="18" height="18" fill="#7981b0" />)}
      </TileLayer>

      <g fill="#2a2a2a" stroke="#fff" strokeOpacity="0.75" strokeWidth="2.400" strokeLinejoin="round" paintOrder="stroke">
        {places.map(([t, x, y, w, size]) => (
          <text key={t} x={x} y={y} fontSize={size ?? 12.5} textLength={w}>{t}</text>
        ))}
        <g fontSize="9.500">
          <text transform="translate(282 198) rotate(-34)">Strand</text>
          <text transform="translate(724 256) rotate(-66)" textLength="52">Rotherhithe</text>
          <text transform="translate(736 240) rotate(-88)">be Tunnel</text>
          <text transform="translate(770 220) rotate(14)">Salter</text>
          <text transform="translate(789 228) rotate(78)">Road</text>
          <text transform="translate(800 167) rotate(58)" textLength="38">Limehous</text>
          <text transform="translate(821 198) rotate(12)">e Link</text>
          <text transform="translate(874 369) rotate(31)" textLength="36">Westferry</text>
          <text transform="translate(907 389) rotate(8)">Road</text>
          <text transform="translate(945 288) rotate(78)" textLength="50">Manchester</text>
        </g>
      </g>
      <g fill="#b0203a" fontStyle="italic" fontSize="10.500" stroke="#fff" strokeOpacity="0.7" strokeWidth="2" paintOrder="stroke">
        <text x="105" y="234" textLength="78">Hyde Park Corner</text>
        <text x="81" y="254.500" textLength="78">Hyde Park Corner</text>
        <text x="873" y="2" textLength="74">Bow Interchange</text>
        <text x="901" y="22.500" textLength="76">Bow Interchange</text>
      </g>
      <text x="37" y="204" fill="#2f8a3c" fontStyle="italic" fontSize="10.500" textLength="44">Hyde Park</text>
      <g fill="#5e92c4" fontStyle="italic" fontSize="10" stroke="#fff" strokeOpacity="0.5" strokeWidth="1.500" paintOrder="stroke">
        {waterLabels.map((w, i) => (
          <text key={i} transform={`translate(${w.x} ${w.y}) rotate(${w.r})`} textLength={w.l}>{w.t}</text>
        ))}
      </g>
      <g fontSize="10" fill="#5a4a35" textAnchor="middle">
        <rect x="505.500" y="298.500" width="33" height="17" rx="2" fill="#f5ccc2" stroke="#cf9a8c" />
        <text x="522" y="311">A100</text>
        <rect x="767.500" y="378.500" width="33" height="17" rx="2" fill="#f9e2c8" stroke="#c9a777" />
        <text x="784" y="391">A200</text>
        <rect x="440.500" y="410.500" width="33" height="17" rx="2" fill="#f9e2c8" stroke="#c9a777" />
        <text x="457" y="423">A215</text>
      </g>
    </svg>
  );
}

function MapView() {
  return (
    <section className="relative mt-[73px] ml-[78px] h-[448px] w-[960px] shrink-0 overflow-hidden bg-[#ddd]">
      <CityMap />

      <div className="absolute top-[10px] left-[10px] w-[34px] rounded-[4px] border-2 border-black/20 bg-clip-padding">
        <div className="flex h-[31px] items-center justify-center rounded-t-[2px] border-b border-[#ccc] bg-white">
          <svg className="size-3" viewBox="0 0 12 12" stroke="#000" strokeWidth="2.600">
            <path d="M0.500 6h11M6 0.500v11" />
          </svg>
        </div>
        <div className="flex h-[30px] items-center justify-center rounded-b-[2px] bg-white">
          <svg className="size-3" viewBox="0 0 12 12" stroke="#000" strokeWidth="2.600">
            <path d="M1.500 6h9" />
          </svg>
        </div>
      </div>

      <svg className="absolute top-[222px] left-[460px] h-[52px] w-[80px]" viewBox="0 0 80 52">
        <ellipse cx="31" cy="36" rx="20" ry="5" transform="translate(11 -3) rotate(-38 31 36)" fill="#000" opacity="0.18" />
      </svg>
      <svg className="absolute top-[230px] left-[468px] h-[41px] w-[25px]" viewBox="0 0 25 41">
        <defs>
          <linearGradient id="pin" x1="0" y1="0" x2="0" y2="1">
            <stop offset="0" stopColor="#2f84cb" />
            <stop offset="1" stopColor="#2471b4" />
          </linearGradient>
        </defs>
        <path d="M12.500 0.500C5.500 0.500 0.500 5.800 0.500 12.500c0 3 1 5.500 2.500 8.500l9.500 19.500L22 21c1.500-3 2.500-5.500 2.500-8.500C24.500 5.800 19.500 0.500 12.500 0.500z" fill="url(#pin)" stroke="#2a6ca3" />
        <circle cx="12.500" cy="12.800" r="4.500" fill="#fff" />
      </svg>

      <div className="absolute top-[163px] left-[307px] h-[60px] w-[347px] rounded-xl bg-white shadow-[0_3px_14px_rgba(0,0,0,0.4)]">
        <p className="pt-[12px] pl-[22px] text-[13px] leading-[17px] tracking-[0.540px] whitespace-nowrap text-[#444]">
          Selecione uma máquina e descubra onde ela
          <br />
          esta :)
        </p>
        <X className="absolute top-[7px] right-[7px] size-[10px] text-[#666]" strokeWidth={4} />
        <svg className="absolute top-[59px] left-[158px] h-[13px] w-[31px]" viewBox="0 0 31 13">
          <path d="M2 0h27L15.500 12.500z" fill="#fff" />
        </svg>
      </div>

      <div className="absolute right-0 bottom-0 flex h-4 items-center bg-white/80 pr-[5px] pl-[5px] text-xs leading-4 whitespace-nowrap text-[#444]">
        <svg className="mr-[3px] h-2 w-3" viewBox="0 0 12 8">
          <path d="M0 0h12v4H0z" fill="#4c7be1" />
          <path d="M0 4h12v4H0z" fill="#ffd500" />
        </svg>
        <span className="text-[#0078a8]">Leaflet</span>
        <span className="mx-[3px]">|</span>
        <span className="text-[11px]">©</span>
        <span className="ml-[3px] tracking-[0.42px] text-[#0078a8]">OpenStreetMap</span>
        <span className="ml-[3px] tracking-[0.3px]">contributors</span>
      </div>
    </section>
  );
}

/* ---------- Footer ---------- */

function Footer() {
  return (
    <footer className="flex h-[187px] border-b border-[#3c4060] bg-[#484d6d] text-base leading-6 text-[#e8e6e6]">
      <AikoLogo className="mt-[66px] ml-[152px] h-12 w-[130px]" />
      <div className="mt-[17px] ml-[303px] flex w-[840px] flex-col gap-[17px]">
        <h4 className="font-bold tracking-[0.55px]">Brasil</h4>
        <div className="flex items-center tracking-[0.66px]">
          <FaEnvelope className="mr-[15px] size-[17px]" />
          contact@aiko.digital
        </div>
        <div className="flex items-center tracking-[0.19px]">
          <FaLocationDot className="mr-[15px] h-[17px] w-[13px]" />
          Rua Alvarenga Peixoto, 1581, 12 Andar - Santo Agostinho - BH MG
        </div>
        <div className="flex items-center tracking-[0.1px]">
          <FaPhone className="mr-[15px] size-[17px]" />
          (31) 3564-0815
        </div>
      </div>
      <div className="mt-[17px] flex flex-col gap-[17px]">
        <h4 className="font-bold tracking-[0.75px]">Chile</h4>
        <div className="flex items-center tracking-[0.66px]">
          <FaEnvelope className="mr-[15px] size-[17px]" />
          contact@aiko.digital
        </div>
        <div className="flex items-center tracking-[0.17px]">
          <FaLocationDot className="mr-[15px] h-[17px] w-[13px]" />
          Santa Beatriz 91, Providencia, RM - Chile
        </div>
      </div>
    </footer>
  );
}

export default function App() {
  return (
    <div className="h-[1040px] w-[1920px] overflow-hidden bg-white font-['Inter',sans-serif]">
      <BrowserChrome />
      <header className="flex h-[187px] bg-[#484d6d]">
        <AikoLogo className="mt-[54px] ml-[852px] h-20 w-[216px]" />
      </header>
      <main className="flex h-[563px] items-start">
        <SearchPanel />
        <MapView />
        <InfoPanel />
      </main>
      <Footer />
    </div>
  );
}
